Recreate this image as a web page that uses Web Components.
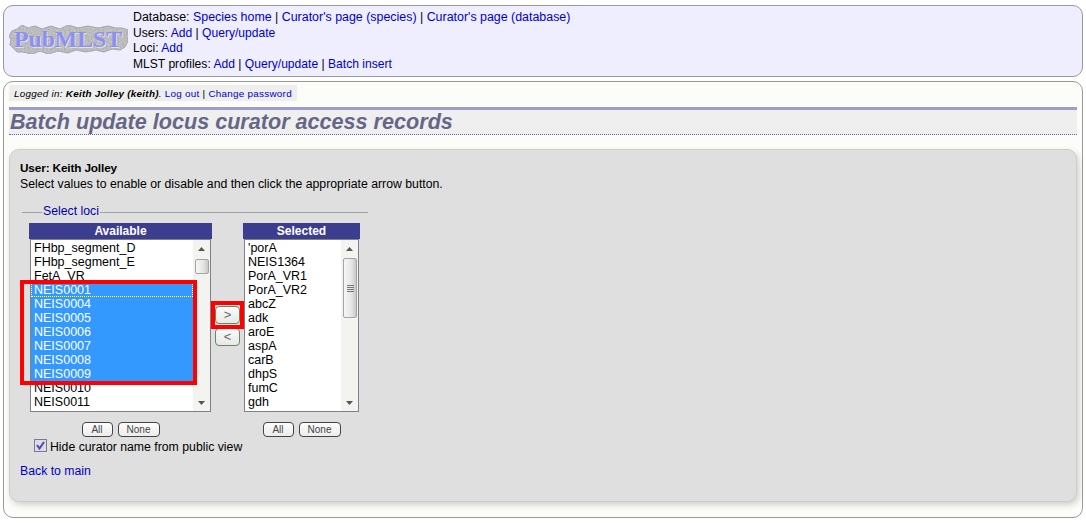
<!DOCTYPE html>
<html>
<head>
<meta charset="utf-8">
<title>Batch update locus curator access records</title>
<style>
    html, body { margin: 0; padding: 0; background: #fff; }
    body { font: 12px/15.5px "Liberation Sans", Arial, sans-serif; color: #000; }
    /* links live in the light DOM of site-header */
    a { color: #0000cc; text-decoration: none; }
    .wide { font-size: 12.42px; }
</style>
</head>
<body>
<site-header>
    <div class="wide">Database: <a href="#">Species home</a> | <a href="#">Curator's page (species)</a> | <a href="#">Curator's page (database)</a></div>
    <div>Users: <a href="#">Add</a> | <a href="#">Query/update</a></div>
    <div>Loci: <a href="#">Add</a></div>
    <div>MLST profiles: <a href="#">Add</a> | <a href="#">Query/update</a> | <a href="#">Batch insert</a></div>
</site-header>
<main-panel>
    <login-bar></login-bar>
    <page-title>Batch update locus curator access records</page-title>
    <access-form></access-form>
</main-panel>

<script>
// Top banner: logo on the left, slotted menu lines on the right
class SiteHeader extends HTMLElement {
    constructor() {
        super();
        this.attachShadow({ mode: 'open' });
        this.shadowRoot.innerHTML = `
            <style>
                :host {
                    display: flex;
                    align-items: flex-start;
                    box-sizing: border-box;
                    height: 72px;
                    margin: 5px 3px 0;
                    padding: 4px 0 0 4px;
                    gap: 4px;
                    border: 1px solid #999;
                    border-radius: 10px;
                    background: #eeeeff;
                    font-size: 12.1px;
                }
                svg { display: block; margin-top: 13px; flex: none; }
                text { font: bold 24px "Liberation Serif", serif; }
            </style>
            <svg width="121" height="33" viewBox="0 0 121 33">
                <defs>
                    <filter id="stone" x="0" y="0" width="100%" height="100%">
                        <feTurbulence type="fractalNoise" baseFrequency="0.6" numOctaves="3" seed="4" result="n"/>
                        <feColorMatrix in="n" type="matrix" values="0 0 0 0 0.42  0 0 0 0 0.42  0 0 0 0 0.42  0 0 0 2.2 -0.75" result="g"/>
                        <feComposite in="g" in2="SourceGraphic" operator="in" result="t"/>
                        <feMerge><feMergeNode in="SourceGraphic"/><feMergeNode in="t"/></feMerge>
                    </filter>
                </defs>
                <path filter="url(#stone)" fill="#c4c4c4" stroke="#a8a8a8" stroke-width="1"
                    d="M1 13 L4 8 L9 6 L14 2 L20 5 L27 3 L34 6 L43 3 L52 6 L60 2 L70 5 L80 3 L90 5 L100 3 L108 5 L114 5 L120 7 L119 13 L120 18 L117 24 L112 27 L104 26 L96 29 L88 27 L78 29 L68 27 L60 30 L50 28 L40 31 L32 28 L24 31 L15 29 L9 29 L5 25 L2 22 L3 17 Z"/>
                <text x="6" y="24" textLength="108" lengthAdjust="spacingAndGlyphs" fill="#f4f4ff" opacity=".7" dx="1" dy="1">PubMLST</text>
                <text x="6" y="24" textLength="108" lengthAdjust="spacingAndGlyphs" fill="#8f8ff0">PubMLST</text>
            </svg>
            <div><slot></slot></div>
        `;
    }
}

// Outer pale panel holding everything under the banner
class MainPanel extends HTMLElement {
    constructor() {
        super();
        this.attachShadow({ mode: 'open' });
        this.shadowRoot.innerHTML = `
            <style>
                :host {
                    display: block;
                    box-sizing: border-box;
                    height: 437px;
                    margin: 4px 3px 0;
                    padding: 3px 5px 0;
                    border: 1px solid #999;
                    border-radius: 10px;
                    background: #fcfdf8;
                }
            </style>
            <slot></slot>
        `;
    }
}

class LoginBar extends HTMLElement {
    constructor() {
        super();
        this.attachShadow({ mode: 'open' });
        this.shadowRoot.innerHTML = `
            <style>
                :host {
                    display: block;
                    width: fit-content;
                    height: 16px;
                    padding: 0 5px;
                    background: #eeeeee;
                    font-size: 9.9px;
                    line-height: 17px;
                    letter-spacing: 0.26px;
                }
                a { color: #0000cc; text-decoration: none; }
            </style>
            <i>Logged in: <b>Keith Jolley (keith)</b>.</i>
            <a href="#">Log out</a> | <a href="#">Change password</a>
        `;
    }
}

class PageTitle extends HTMLElement {
    constructor() {
        super();
        this.attachShadow({ mode: 'open' });
        this.shadowRoot.innerHTML = `
            <style>
                :host {
                    display: block;
                    margin-top: 6px;
                    padding-left: 1px;
                    height: 24px;
                    border-top: 3px solid #9d9dcc;
                    border-bottom: 1px dotted #6666aa;
                    background: #efefef;
                    color: #666688;
                    font: italic bold 21.6px/24px "Liberation Sans", Arial, sans-serif;
                    white-space: nowrap;
                }
            </style>
            <slot></slot>
        `;
    }
}

// Small rounded button, used for All / None and the arrow buttons
class FormButton extends HTMLElement {
    constructor() {
        super();
        this.attachShadow({ mode: 'open' });
        this.shadowRoot.innerHTML = `
            <style>
                :host {
                    display: block;
                    box-sizing: border-box;
                    height: 15px;
                    border: 1px solid #444;
                    border-radius: 4px;
                    background: linear-gradient(#fdfdfd, #ececec);
                    color: #444;
                    font-size: 10px;
                    line-height: 13px;
                    text-align: center;
                }
                :host([arrow]) {
                    height: 18px;
                    border-color: #5f8a6a;
                    background: linear-gradient(#fafafa, #e8e8e4);
                    color: #666;
                    font-size: 13px;
                    line-height: 15px;
                }
            </style>
            <slot></slot>
        `;
    }
}

// XP style scrollbar track, thumb position comes from attributes
class ScrollTrack extends HTMLElement {
    constructor() {
        super();
        this.attachShadow({ mode: 'open' });
        const top = this.getAttribute('thumb-top');
        const height = this.getAttribute('thumb-height');
        const grip = this.hasAttribute('grip');
        this.shadowRoot.innerHTML = `
            <style>
                :host {
                    display: flex;
                    flex-direction: column;
                    align-items: center;
                    width: 17px;
                    flex: none;
                    background: #f3f3f0;
                }
                .end { display: flex; align-items: center; justify-content: center; height: 17px; flex: none; }
                .track { flex: 1; width: 100%; box-sizing: border-box; padding: 0 1px 0 2px; }
                .thumb {
                    box-sizing: border-box;
                    margin-top: ${top}px;
                    height: ${height}px;
                    border: 1px solid #a4a4a4;
                    border-radius: 2px;
                    background: linear-gradient(90deg, #f6f6f6, #e6e6e6 60%, #c8c8c8);
                    display: flex;
                    flex-direction: column;
                    align-items: center;
                    justify-content: center;
                    gap: 1px;
                }
                .thumb span { width: 7px; height: 1px; background: #777; }
            </style>
            <div class="end"><svg width="7" height="4"><path d="M3.5 0 L7 4 H0 Z" fill="#555"/></svg></div>
            <div class="track"><div class="thumb">${grip ? '<span></span><span></span><span></span><span></span>' : ''}</div></div>
            <div class="end"><svg width="7" height="4"><path d="M0 0 H7 L3.5 4 Z" fill="#555"/></svg></div>
        `;
    }
}

// Heading plus a multi select look-alike with its scrollbar
class PickList extends HTMLElement {
    constructor() {
        super();
        this.attachShadow({ mode: 'open' });
        const items = this.getAttribute('items').split(',');
        const selected = (this.getAttribute('selected') || '').split(',');
        const rows = items.map((item, i) => {
            const cls = selected.includes(item) ? (i === 3 ? 'sel focus' : 'sel') : '';
            return `<div class="row ${cls}">${item}</div>`;
        }).join('');
        this.shadowRoot.innerHTML = `
            <style>
                :host { display: block; flex: none; width: var(--list-width); }
                .head {
                    height: 16px;
                    background: #3d3d8f;
                    color: #fff;
                    font-size: 12px;
                    font-weight: bold;
                    line-height: 16px;
                    text-align: center;
                }
                .box {
                    display: flex;
                    box-sizing: border-box;
                    height: 173px;
                    margin: 0 1px;
                    border: 1px solid #7f8089;
                    background: #fff;
                }
                .rows { flex: 1; min-width: 0; padding-top: 1px; }
                .row {
                    box-sizing: border-box;
                    height: 14px;
                    padding-left: 3px;
                    font-size: 12.5px;
                    line-height: 14px;
                    white-space: nowrap;
                }
                .sel { background: #3399ff; color: #fff; }
                .focus { outline: 1px dotted #fff; outline-offset: -1px; }
                .btns {
                    display: flex;
                    justify-content: center;
                    gap: 5px;
                    margin-top: 10px;
                }
                form-button { width: 31px; }
                form-button + form-button { width: 42px; }
            </style>
            <div class="head">${this.getAttribute('heading')}</div>
            <div class="box">
                <div class="rows">${rows}</div>
                <scroll-track thumb-top="${this.getAttribute('thumb-top')}" thumb-height="${this.getAttribute('thumb-height')}" ${this.hasAttribute('grip') ? 'grip' : ''}></scroll-track>
            </div>
            <div class="btns"><form-button>All</form-button><form-button>None</form-button></div>
        `;
    }
}

// Grey rounded box with the two lists and the red call-outs
class AccessForm extends HTMLElement {
    constructor() {
        super();
        this.attachShadow({ mode: 'open' });
        this.shadowRoot.innerHTML = `
            <style>
                :host {
                    display: block;
                    position: relative;
                    box-sizing: border-box;
                    height: 353px;
                    margin-top: 14px;
                    padding: 10px 10px 0;
                    border: 1px solid #cccccc;
                    border-radius: 10px;
                    background: #dfdfdf;
                    box-shadow: 2px 3px 6px rgba(0, 0, 0, 0.18);
                    font-size: 12.27px;
                }
                p { margin: 0; line-height: 16px; }
                p b { font-size: 11.8px; letter-spacing: -0.15px; }
                a { color: #0000cc; text-decoration: none; }
                .set {
                    width: 346px;
                    margin: 13px 0 0 2px;
                    height: 249px;
                }
                .legend {
                    display: flex;
                    align-items: center;
                    height: 14px;
                    color: #0000aa;
                }
                .legend::before { content: ""; width: 20px; height: 1px; background: #a0a0a0; margin-right: 1px; }
                .legend::after { content: ""; flex: 1; height: 1px; background: #a0a0a0; margin-left: 1px; }
                .lists { display: flex; margin: 4px 0 0 7px; }
                .arrows {
                    display: flex;
                    flex-direction: column;
                    gap: 4px;
                    width: 25px;
                    margin: 83px 3px 0 3px;
                    flex: none;
                }
                pick-list.a { --list-width: 183px; }
                pick-list.b { --list-width: 117px; }
                .check {
                    display: flex;
                    align-items: center;
                    gap: 3px;
                    height: 15px;
                    margin: 2px 0 0 12px;
                }
                .tick {
                    box-sizing: border-box;
                    width: 13px;
                    height: 13px;
                    margin-bottom: 2px;
                    border: 1px solid #7b7b8c;
                    background: #dcdce6;
                }
                .tick svg { display: block; }
                .check span + span { margin-top: 2px; }
                .back { margin-top: 9px; }
                .mark { position: absolute; box-sizing: border-box; border: 4px solid #ff0000; }
                .mark.one { left: 10px; top: 130px; width: 177px; height: 105px; }
                .mark.two { left: 201px; top: 151px; width: 33px; height: 28px; }
            </style>
            <p><b>User: Keith Jolley</b></p>
            <p>Select values to enable or disable and then click the appropriate arrow button.</p>
            <div class="set">
                <div class="legend">Select loci</div>
                <div class="lists">
                    <pick-list class="a" heading="Available" thumb-top="2" thumb-height="15"
                        items="FHbp_segment_D,FHbp_segment_E,FetA_VR,NEIS0001,NEIS0004,NEIS0005,NEIS0006,NEIS0007,NEIS0008,NEIS0009,NEIS0010,NEIS0011"
                        selected="NEIS0001,NEIS0004,NEIS0005,NEIS0006,NEIS0007,NEIS0008,NEIS0009"></pick-list>
                    <div class="arrows">
                        <form-button arrow>&gt;</form-button>
                        <form-button arrow>&lt;</form-button>
                    </div>
                    <pick-list class="b" heading="Selected" thumb-top="1" thumb-height="60" grip
                        items="'porA,NEIS1364,PorA_VR1,PorA_VR2,abcZ,adk,aroE,aspA,carB,dhpS,fumC,gdh"></pick-list>
                </div>
                <div class="check">
                    <span class="tick"><svg width="11" height="11"><path d="M2 5 L4.5 8.5 L9 2" fill="none" stroke="#4a4ab0" stroke-width="2"/></svg></span>
                    <span>Hide curator name from public view</span>
                </div>
            </div>
            <p class="back"><a href="#">Back to main</a></p>
            <div class="mark one"></div>
            <div class="mark two"></div>
        `;
    }
}

customElements.define('site-header', SiteHeader);
customElements.define('main-panel', MainPanel);
customElements.define('login-bar', LoginBar);
customElements.define('page-title', PageTitle);
customElements.define('form-button', FormButton);
customElements.define('scroll-track', ScrollTrack);
customElements.define('pick-list', PickList);
customElements.define('access-form', AccessForm);
</script>
</body>
</html>
